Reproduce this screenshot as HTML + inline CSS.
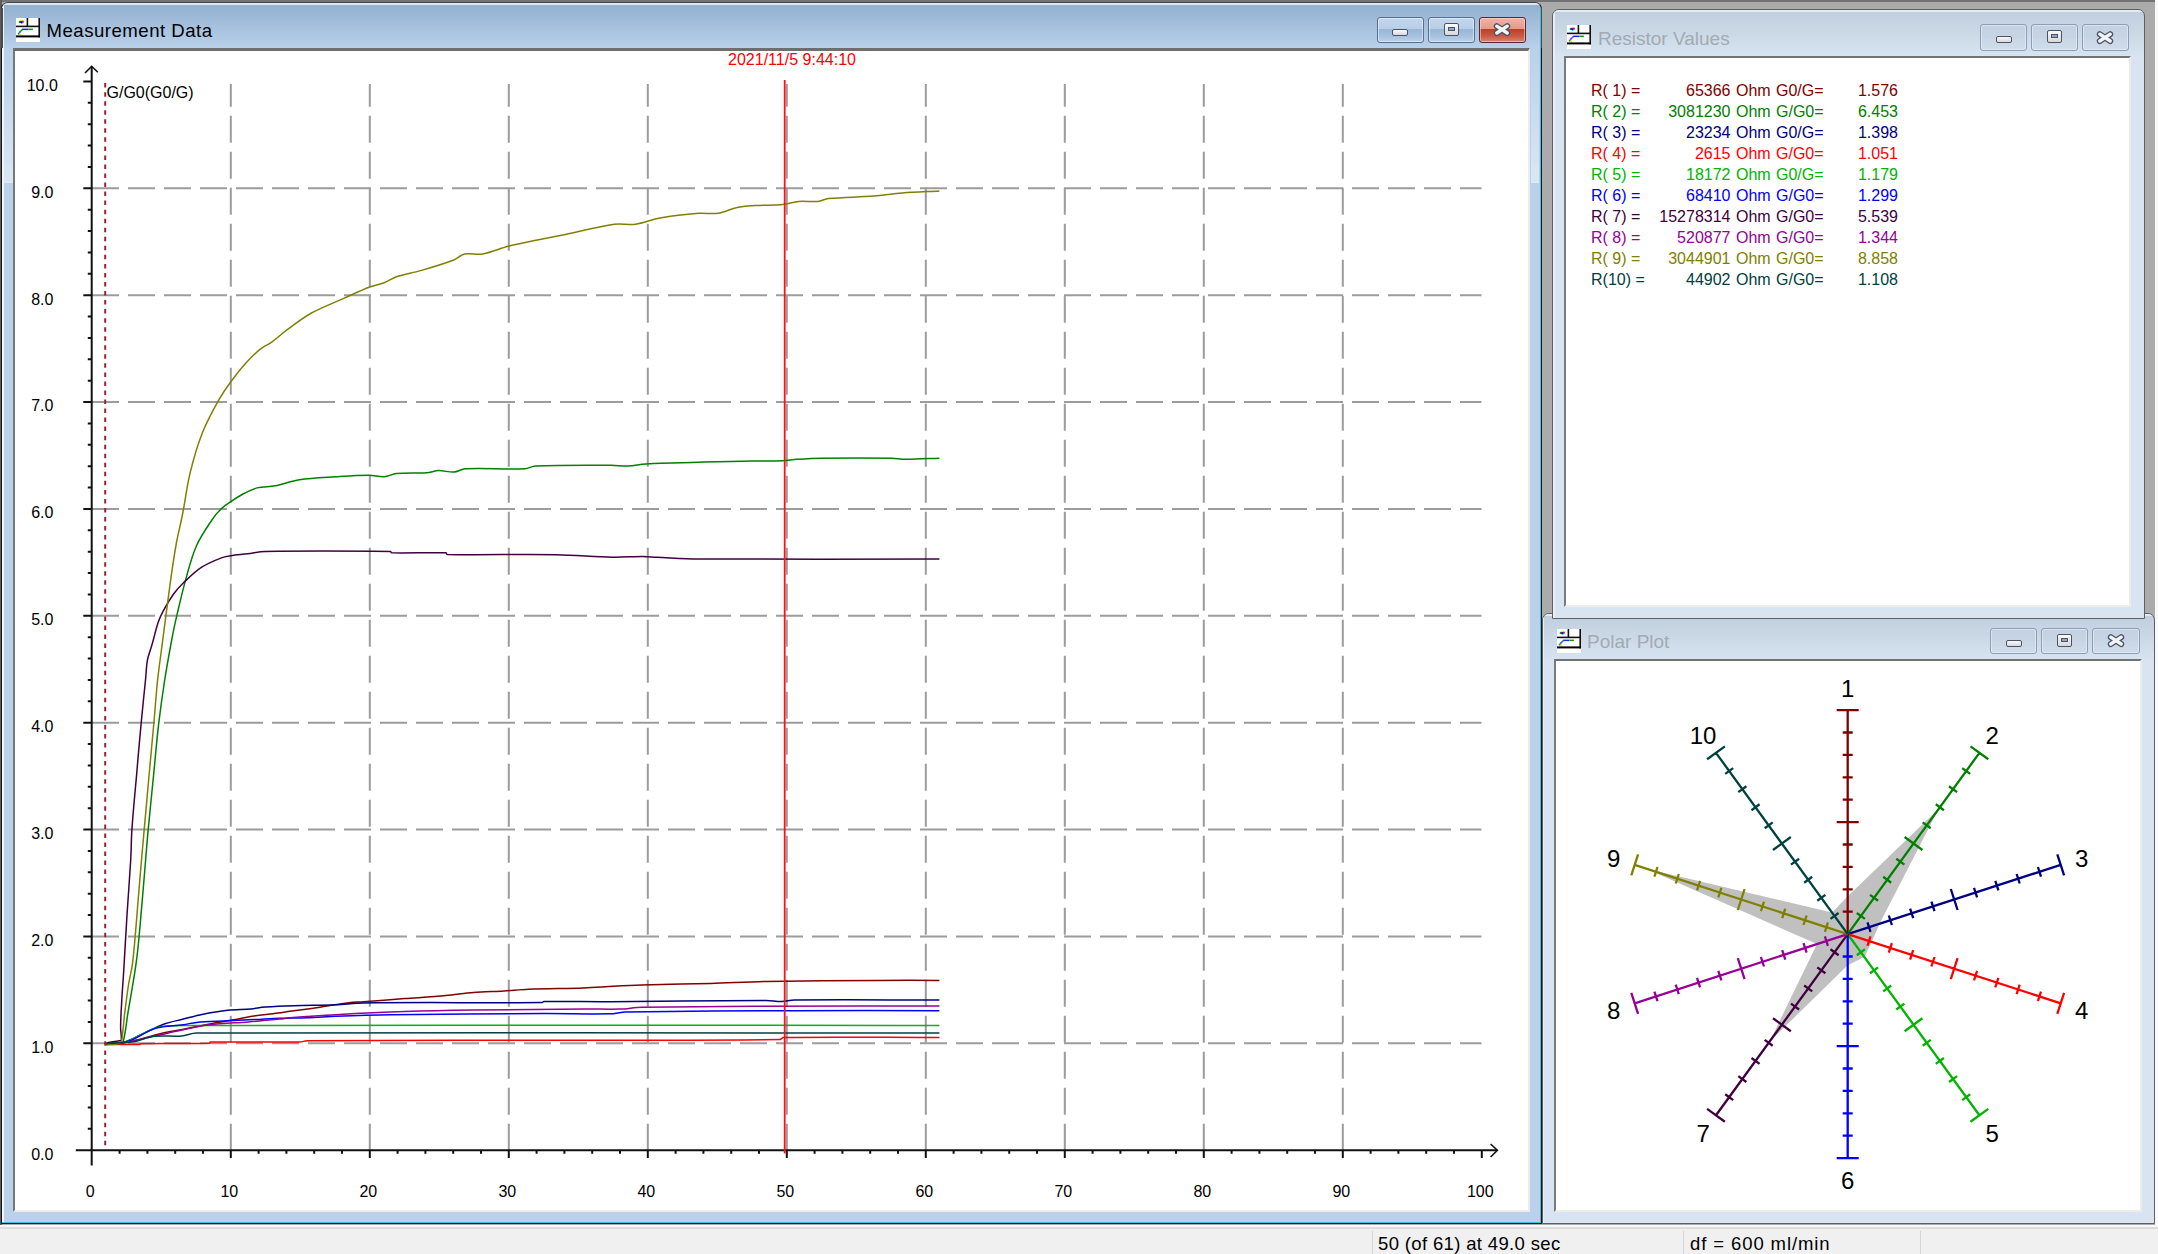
<!DOCTYPE html><html><head><meta charset="utf-8"><style>

html,body{margin:0;padding:0;width:2158px;height:1254px;overflow:hidden;background:#f0f0f0;font-family:'Liberation Sans', sans-serif;}
.abs{position:absolute;}
.win{position:absolute;box-sizing:border-box;border:1.5px solid #3a3a3a;border-radius:7px 7px 0 0;overflow:hidden;}
.btn{position:absolute;box-sizing:border-box;height:26.5px;border-radius:3px;}
.ttl{position:absolute;font-size:19px;white-space:pre;line-height:1;}
.txt{position:absolute;white-space:pre;line-height:1;}

</style></head><body>
<div class="abs" style="left:0;top:0;width:2155px;height:1225px;background:#ababab"></div>
<div class="abs" style="left:0;top:0;width:2155px;height:2px;background:#737373"></div>
<div class="abs" style="left:0;top:0;width:1.5px;height:1225px;background:#5c5c5c"></div>
<div class="abs" style="left:2155px;top:0;width:3px;height:1225px;background:#fafafa"></div>
<div class="abs" style="left:0;top:1224.5px;width:2158px;height:2.5px;background:#f8f8f8"></div>
<div class="abs" style="left:0;top:1227px;width:2158px;height:2px;background:#dcdcdc"></div>
<div class="win" style="left:1541.5px;top:613.3px;width:613.5px;height:611.2px;border-color:#606060;background:linear-gradient(#bfcedd 0px,#d6e3f0 45px,#d8e4f1 46px,#d8e4f1 100%)">
<div class="abs" style="left:0;top:0;right:0;height:1.5px;background:#e4ecf4"></div>
<div class="abs" style="left:0;top:0;bottom:0;width:1.5px;background:#e8eff6"></div>
</div>
<svg class="abs" style="left:1556.5px;top:628.7px" width="24" height="24" viewBox="0 0 24 24">
<rect x="0" y="0" width="24" height="24" fill="#fff"/>
<rect x="10.6" y="0" width="1.6" height="9" fill="#111"/>
<rect x="22.4" y="0" width="1.6" height="19.4" fill="#111"/>
<rect x="0" y="7.6" width="24" height="1.6" fill="#111"/>
<rect x="0" y="17.4" width="24" height="2" fill="#000"/>
<circle cx="5.3" cy="2.6" r="1.2" fill="#ffff00"/>
<circle cx="6.8" cy="3.8" r="1.2" fill="#ff2020"/>
<circle cx="3.9" cy="3.9" r="1.2" fill="#00a000"/>
<circle cx="5.8" cy="5.0" r="1.1" fill="#00ffff"/>
<circle cx="5.3" cy="4.1" r="1.2" fill="#0000ff"/>
<path d="M6.1 11.35 H12.2" stroke="#2020ff" stroke-width="1.5"/>
<path d="M12.2 11.35 H16.9" stroke="#109010" stroke-width="1.5"/>
<path d="M6.3 11.6 L4.6 13.2" stroke="#20a020" stroke-width="1.6"/>
<path d="M4.6 13.2 L3.3 14.6" stroke="#3030ff" stroke-width="1.6"/>
<path d="M3.3 14.6 L2.2 16.4" stroke="#20a020" stroke-width="1.6"/>
<path d="M3.4 16.4 H5" stroke="#e0e000" stroke-width="1.4"/>
</svg>
<div class="ttl" style="left:1587px;top:632px;color:#a3aab3">Polar Plot</div>
<div class="btn" style="left:1990.4px;top:627.5px;width:46.5px;border:1.3px solid #8c9db8;background:linear-gradient(#c3d1e0 0%,#c6d4e3 50%,#c8d6e5 51%,#d0dcea 100%);box-shadow:inset 0 0 0 1px rgba(240,248,255,0.5)"></div>
<div class="abs" style="left:2005.7px;top:639.5px;width:16px;height:7px;box-sizing:border-box;border:1.4px solid #4a5468;border-radius:2px;background:linear-gradient(#fafafa,#d8d8d8)"></div>
<div class="btn" style="left:2041.4px;top:627.5px;width:46.5px;border:1.3px solid #8c9db8;background:linear-gradient(#c3d1e0 0%,#c6d4e3 50%,#c8d6e5 51%,#d0dcea 100%);box-shadow:inset 0 0 0 1px rgba(240,248,255,0.5)"></div>
<div class="abs" style="left:2056.8px;top:633.5px;width:15.5px;height:13px;box-sizing:border-box;border:1.4px solid #4a5468;border-radius:2px;background:linear-gradient(#fafafa,#d8d8d8)"></div>
<div class="abs" style="left:2061.2px;top:637.5px;width:7px;height:4px;box-sizing:border-box;border:1.2px solid #4a5468;background:#8fa6c4"></div>
<div class="btn" style="left:2092.2px;top:627.5px;width:47.5px;border:1.3px solid #8c9db8;background:linear-gradient(#c3d1e0 0%,#c6d4e3 50%,#c8d6e5 51%,#d0dcea 100%);box-shadow:inset 0 0 0 1px rgba(240,248,255,0.5)"></div>
<svg class="abs" style="left:2106.9px;top:633.0px" width="18" height="15" viewBox="0 0 18 15">
<path d="M3.8 4.2 L14.2 11 M14.2 4.2 L3.8 11" stroke="#4a5468" stroke-width="6" stroke-linecap="round"/>
<path d="M3.8 4.2 L14.2 11 M14.2 4.2 L3.8 11" stroke="#f4f4f4" stroke-width="3.4" stroke-linecap="round"/>
</svg>
<div class="abs" style="left:1553.6px;top:659.2px;width:588.9px;height:552.8px;box-sizing:border-box;border-top:2.8px solid #727272;border-left:2.8px solid #7a7a7a;border-right:2px solid #ececec;border-bottom:2.6px solid #ececec;background:#fff"></div>
<div class="win" style="left:1552px;top:9.2px;width:592.6999999999998px;height:610.3px;border-color:#606060;background:linear-gradient(#bfcedd 0px,#d6e3f0 45px,#d8e4f1 46px,#d8e4f1 100%)">
<div class="abs" style="left:0;top:0;right:0;height:1.5px;background:#e4ecf4"></div>
<div class="abs" style="left:0;top:0;bottom:0;width:1.5px;background:#e8eff6"></div>
</div>
<svg class="abs" style="left:1567px;top:24.9px" width="24" height="24" viewBox="0 0 24 24">
<rect x="0" y="0" width="24" height="24" fill="#fff"/>
<rect x="10.6" y="0" width="1.6" height="9" fill="#111"/>
<rect x="22.4" y="0" width="1.6" height="19.4" fill="#111"/>
<rect x="0" y="7.6" width="24" height="1.6" fill="#111"/>
<rect x="0" y="17.4" width="24" height="2" fill="#000"/>
<circle cx="5.3" cy="2.6" r="1.2" fill="#ffff00"/>
<circle cx="6.8" cy="3.8" r="1.2" fill="#ff2020"/>
<circle cx="3.9" cy="3.9" r="1.2" fill="#00a000"/>
<circle cx="5.8" cy="5.0" r="1.1" fill="#00ffff"/>
<circle cx="5.3" cy="4.1" r="1.2" fill="#0000ff"/>
<path d="M6.1 11.35 H12.2" stroke="#2020ff" stroke-width="1.5"/>
<path d="M12.2 11.35 H16.9" stroke="#109010" stroke-width="1.5"/>
<path d="M6.3 11.6 L4.6 13.2" stroke="#20a020" stroke-width="1.6"/>
<path d="M4.6 13.2 L3.3 14.6" stroke="#3030ff" stroke-width="1.6"/>
<path d="M3.3 14.6 L2.2 16.4" stroke="#20a020" stroke-width="1.6"/>
<path d="M3.4 16.4 H5" stroke="#e0e000" stroke-width="1.4"/>
</svg>
<div class="ttl" style="left:1598px;top:29px;color:#a3aab3">Resistor Values</div>
<div class="btn" style="left:1980.2px;top:24.3px;width:46.5px;border:1.3px solid #8c9db8;background:linear-gradient(#c3d1e0 0%,#c6d4e3 50%,#c8d6e5 51%,#d0dcea 100%);box-shadow:inset 0 0 0 1px rgba(240,248,255,0.5)"></div>
<div class="abs" style="left:1995.5px;top:36.3px;width:16px;height:7px;box-sizing:border-box;border:1.4px solid #4a5468;border-radius:2px;background:linear-gradient(#fafafa,#d8d8d8)"></div>
<div class="btn" style="left:2031px;top:24.3px;width:46.5px;border:1.3px solid #8c9db8;background:linear-gradient(#c3d1e0 0%,#c6d4e3 50%,#c8d6e5 51%,#d0dcea 100%);box-shadow:inset 0 0 0 1px rgba(240,248,255,0.5)"></div>
<div class="abs" style="left:2046.5px;top:30.3px;width:15.5px;height:13px;box-sizing:border-box;border:1.4px solid #4a5468;border-radius:2px;background:linear-gradient(#fafafa,#d8d8d8)"></div>
<div class="abs" style="left:2050.8px;top:34.3px;width:7px;height:4px;box-sizing:border-box;border:1.2px solid #4a5468;background:#8fa6c4"></div>
<div class="btn" style="left:2081.6px;top:24.3px;width:47.5px;border:1.3px solid #8c9db8;background:linear-gradient(#c3d1e0 0%,#c6d4e3 50%,#c8d6e5 51%,#d0dcea 100%);box-shadow:inset 0 0 0 1px rgba(240,248,255,0.5)"></div>
<svg class="abs" style="left:2096.3px;top:29.8px" width="18" height="15" viewBox="0 0 18 15">
<path d="M3.8 4.2 L14.2 11 M14.2 4.2 L3.8 11" stroke="#4a5468" stroke-width="6" stroke-linecap="round"/>
<path d="M3.8 4.2 L14.2 11 M14.2 4.2 L3.8 11" stroke="#f4f4f4" stroke-width="3.4" stroke-linecap="round"/>
</svg>
<div class="abs" style="left:1564px;top:56.3px;width:567px;height:551.2px;box-sizing:border-box;border-top:2.8px solid #727272;border-left:2.8px solid #7a7a7a;border-right:2px solid #ececec;border-bottom:2.5px solid #ececec;background:#fff"></div>
<div class="win" style="left:1px;top:2px;width:1541px;height:1222.4px;border-color:#161616;border-top-color:#484848;background:linear-gradient(#94b1d1 3px,#bad1ea 46px,#b9d1ea 47px,#b9d1ea 100%)">
<div class="abs" style="left:0;top:0;right:0;height:2px;background:#dfe8f1"></div>
<div class="abs" style="left:0;top:0;bottom:0;width:1.6px;background:#eef5fb"></div>
<div class="abs" style="right:0;top:6px;bottom:0;width:1.5px;background:#3dbfe0"></div>
<div class="abs" style="left:0;right:0;bottom:0;height:1.5px;background:#3dbfe0"></div>
</div>
<div class="abs" style="left:1px;top:8px;width:1.5px;height:40px;background:#4a4a4a"></div>
<div class="abs" style="left:1540.5px;top:8px;width:1.5px;height:40px;background:#4a4a4a"></div>
<div class="abs" style="left:4px;top:51px;width:8.5px;height:132px;background:linear-gradient(rgba(220,232,244,0) 0%,rgba(222,234,246,0.9) 100%)"></div>
<div class="abs" style="left:1530.5px;top:51px;width:8.5px;height:132px;background:linear-gradient(rgba(220,232,244,0) 0%,rgba(222,234,246,0.9) 100%)"></div>
<svg class="abs" style="left:16px;top:18px" width="24" height="24" viewBox="0 0 24 24">
<rect x="0" y="0" width="24" height="24" fill="#fff"/>
<rect x="10.6" y="0" width="1.6" height="9" fill="#111"/>
<rect x="22.4" y="0" width="1.6" height="19.4" fill="#111"/>
<rect x="0" y="7.6" width="24" height="1.6" fill="#111"/>
<rect x="0" y="17.4" width="24" height="2" fill="#000"/>
<circle cx="5.3" cy="2.6" r="1.2" fill="#ffff00"/>
<circle cx="6.8" cy="3.8" r="1.2" fill="#ff2020"/>
<circle cx="3.9" cy="3.9" r="1.2" fill="#00a000"/>
<circle cx="5.8" cy="5.0" r="1.1" fill="#00ffff"/>
<circle cx="5.3" cy="4.1" r="1.2" fill="#0000ff"/>
<path d="M6.1 11.35 H12.2" stroke="#2020ff" stroke-width="1.5"/>
<path d="M12.2 11.35 H16.9" stroke="#109010" stroke-width="1.5"/>
<path d="M6.3 11.6 L4.6 13.2" stroke="#20a020" stroke-width="1.6"/>
<path d="M4.6 13.2 L3.3 14.6" stroke="#3030ff" stroke-width="1.6"/>
<path d="M3.3 14.6 L2.2 16.4" stroke="#20a020" stroke-width="1.6"/>
<path d="M3.4 16.4 H5" stroke="#e0e000" stroke-width="1.4"/>
</svg>
<div class="ttl" style="left:46.5px;top:22.3px;color:#000;font-size:18.6px;letter-spacing:0.5px">Measurement Data</div>
<div class="btn" style="left:1377.1px;top:16.7px;width:46.5px;border:1.3px solid #566f8e;background:linear-gradient(#c3d7ed 0%,#b8cee8 45%,#9ab6d6 46%,#a7c1df 75%,#bcd2ea 100%);box-shadow:inset 0 0 0 1px rgba(235,245,255,0.6)"></div>
<div class="abs" style="left:1392.3px;top:28.7px;width:16px;height:7px;box-sizing:border-box;border:1.4px solid #4a5468;border-radius:2px;background:linear-gradient(#fafafa,#d8d8d8)"></div>
<div class="btn" style="left:1428.1px;top:16.7px;width:46.5px;border:1.3px solid #566f8e;background:linear-gradient(#c3d7ed 0%,#b8cee8 45%,#9ab6d6 46%,#a7c1df 75%,#bcd2ea 100%);box-shadow:inset 0 0 0 1px rgba(235,245,255,0.6)"></div>
<div class="abs" style="left:1443.5px;top:22.7px;width:15.5px;height:13px;box-sizing:border-box;border:1.4px solid #4a5468;border-radius:2px;background:linear-gradient(#fafafa,#d8d8d8)"></div>
<div class="abs" style="left:1447.8px;top:26.7px;width:7px;height:4px;box-sizing:border-box;border:1.2px solid #4a5468;background:#8fa6c4"></div>
<div class="btn" style="left:1478.6px;top:16.7px;width:47.5px;border:1.3px solid #5a2535;background:linear-gradient(#eeb4a8 0%,#e49a88 45%,#bb3f25 46%,#c85a44 75%,#d98474 100%);box-shadow:inset 0 0 0 1px rgba(255,220,210,0.55)"></div>
<svg class="abs" style="left:1493.3px;top:22.2px" width="18" height="15" viewBox="0 0 18 15">
<path d="M3.8 4.2 L14.2 11 M14.2 4.2 L3.8 11" stroke="#4a5468" stroke-width="6" stroke-linecap="round"/>
<path d="M3.8 4.2 L14.2 11 M14.2 4.2 L3.8 11" stroke="#f4f4f4" stroke-width="3.4" stroke-linecap="round"/>
</svg>
<div class="abs" style="left:13px;top:48px;width:1516.7px;height:1164.2px;box-sizing:border-box;border-top:3px solid #6e6e6e;border-left:2.8px solid #777;border-right:2.5px solid #ececec;border-bottom:2.5px solid #ececec;background:#fff"></div>
<svg class="abs" style="left:0;top:0" width="2158" height="1254" viewBox="0 0 2158 1254">
<g font-family="'Liberation Sans', sans-serif">
<path d="M92 1043.3 H1481.5 M92 936.4 H1481.5 M92 829.6 H1481.5 M92 722.7 H1481.5 M92 615.8 H1481.5 M92 508.9 H1481.5 M92 402.0 H1481.5 M92 295.2 H1481.5 M92 188.3 H1481.5" stroke="#9c9c9c" stroke-width="2" stroke-dasharray="27 9" fill="none"/>
<path d="M230.8 1150.8 V84 M369.8 1150.8 V84 M508.8 1150.8 V84 M647.8 1150.8 V84 M786.8 1150.8 V84 M925.8 1150.8 V84 M1064.8 1150.8 V84 M1203.8 1150.8 V84 M1342.8 1150.8 V84" stroke="#9c9c9c" stroke-width="2" stroke-dasharray="27 9" fill="none"/>
<path d="M105.2 83.1 V1150" stroke="#9a2430" stroke-width="2" stroke-dasharray="4.5 4.54" fill="none"/>
<path d="M91.7 66.5 V1165.5 M75.8 1150.2 H1497" stroke="#111" stroke-width="2" fill="none"/>
<path d="M85 73 L91.7 66.3 L97.8 72.3 M1490.6 1144 L1497.4 1150.2 L1490.6 1157" stroke="#111" stroke-width="1.6" fill="none"/>
<path d="M87.8 1128.8 H91.7 M87.8 1107.4 H91.7 M87.8 1086.1 H91.7 M87.8 1064.7 H91.7 M83.3 1043.3 H91.7 M87.8 1021.9 H91.7 M87.8 1000.6 H91.7 M87.8 979.2 H91.7 M87.8 957.8 H91.7 M83.3 936.4 H91.7 M87.8 915.1 H91.7 M87.8 893.7 H91.7 M87.8 872.3 H91.7 M87.8 850.9 H91.7 M83.3 829.6 H91.7 M87.8 808.2 H91.7 M87.8 786.8 H91.7 M87.8 765.4 H91.7 M87.8 744.1 H91.7 M83.3 722.7 H91.7 M87.8 701.3 H91.7 M87.8 679.9 H91.7 M87.8 658.6 H91.7 M87.8 637.2 H91.7 M83.3 615.8 H91.7 M87.8 594.4 H91.7 M87.8 573.0 H91.7 M87.8 551.7 H91.7 M87.8 530.3 H91.7 M83.3 508.9 H91.7 M87.8 487.5 H91.7 M87.8 466.2 H91.7 M87.8 444.8 H91.7 M87.8 423.4 H91.7 M83.3 402.0 H91.7 M87.8 380.7 H91.7 M87.8 359.3 H91.7 M87.8 337.9 H91.7 M87.8 316.5 H91.7 M83.3 295.2 H91.7 M87.8 273.8 H91.7 M87.8 252.4 H91.7 M87.8 231.0 H91.7 M87.8 209.7 H91.7 M83.3 188.3 H91.7 M87.8 166.9 H91.7 M87.8 145.5 H91.7 M87.8 124.2 H91.7 M87.8 102.8 H91.7 M83.3 81.4 H91.7 M119.6 1150.2 V1153.8 M147.4 1150.2 V1153.8 M175.2 1150.2 V1153.8 M203.0 1150.2 V1153.8 M230.8 1150.2 V1158 M258.6 1150.2 V1153.8 M286.4 1150.2 V1153.8 M314.2 1150.2 V1153.8 M342.0 1150.2 V1153.8 M369.8 1150.2 V1158 M397.6 1150.2 V1153.8 M425.4 1150.2 V1153.8 M453.2 1150.2 V1153.8 M481.0 1150.2 V1153.8 M508.8 1150.2 V1158 M536.6 1150.2 V1153.8 M564.4 1150.2 V1153.8 M592.2 1150.2 V1153.8 M620.0 1150.2 V1153.8 M647.8 1150.2 V1158 M675.6 1150.2 V1153.8 M703.4 1150.2 V1153.8 M731.2 1150.2 V1153.8 M759.0 1150.2 V1153.8 M786.8 1150.2 V1158 M814.6 1150.2 V1153.8 M842.4 1150.2 V1153.8 M870.2 1150.2 V1153.8 M898.0 1150.2 V1153.8 M925.8 1150.2 V1158 M953.6 1150.2 V1153.8 M981.4 1150.2 V1153.8 M1009.2 1150.2 V1153.8 M1037.0 1150.2 V1153.8 M1064.8 1150.2 V1158 M1092.6 1150.2 V1153.8 M1120.4 1150.2 V1153.8 M1148.2 1150.2 V1153.8 M1176.0 1150.2 V1153.8 M1203.8 1150.2 V1158 M1231.6 1150.2 V1153.8 M1259.4 1150.2 V1153.8 M1287.2 1150.2 V1153.8 M1315.0 1150.2 V1153.8 M1342.8 1150.2 V1158 M1370.6 1150.2 V1153.8 M1398.4 1150.2 V1153.8 M1426.2 1150.2 V1153.8 M1454.0 1150.2 V1153.8 M1481.8 1150.2 V1158" stroke="#111" stroke-width="2" fill="none"/>
<text x="42.3" y="1159.5" font-size="16" text-anchor="middle" fill="#000">0.0</text>
<text x="42.3" y="1052.6" font-size="16" text-anchor="middle" fill="#000">1.0</text>
<text x="42.3" y="945.7" font-size="16" text-anchor="middle" fill="#000">2.0</text>
<text x="42.3" y="838.9" font-size="16" text-anchor="middle" fill="#000">3.0</text>
<text x="42.3" y="732.0" font-size="16" text-anchor="middle" fill="#000">4.0</text>
<text x="42.3" y="625.1" font-size="16" text-anchor="middle" fill="#000">5.0</text>
<text x="42.3" y="518.2" font-size="16" text-anchor="middle" fill="#000">6.0</text>
<text x="42.3" y="411.3" font-size="16" text-anchor="middle" fill="#000">7.0</text>
<text x="42.3" y="304.5" font-size="16" text-anchor="middle" fill="#000">8.0</text>
<text x="42.3" y="197.6" font-size="16" text-anchor="middle" fill="#000">9.0</text>
<text x="42.3" y="90.7" font-size="16" text-anchor="middle" fill="#000">10.0</text>
<text x="90.3" y="1197.4" font-size="16" text-anchor="middle" fill="#000">0</text>
<text x="229.3" y="1197.4" font-size="16" text-anchor="middle" fill="#000">10</text>
<text x="368.3" y="1197.4" font-size="16" text-anchor="middle" fill="#000">20</text>
<text x="507.3" y="1197.4" font-size="16" text-anchor="middle" fill="#000">30</text>
<text x="646.3" y="1197.4" font-size="16" text-anchor="middle" fill="#000">40</text>
<text x="785.3" y="1197.4" font-size="16" text-anchor="middle" fill="#000">50</text>
<text x="924.3" y="1197.4" font-size="16" text-anchor="middle" fill="#000">60</text>
<text x="1063.3" y="1197.4" font-size="16" text-anchor="middle" fill="#000">70</text>
<text x="1202.3" y="1197.4" font-size="16" text-anchor="middle" fill="#000">80</text>
<text x="1341.3" y="1197.4" font-size="16" text-anchor="middle" fill="#000">90</text>
<text x="1480.3" y="1197.4" font-size="16" text-anchor="middle" fill="#000">100</text>
<text x="106.5" y="97.5" font-size="16" fill="#000">G/G0(G0/G)</text>
<path d="M106.0 1043.7 C110.7 1043.5 115.4 1043.5 120.0 1043.0 C125.1 1042.4 130.2 1041.6 135.2 1040.4 C143.3 1038.5 151.2 1035.8 159.3 1033.9 C167.3 1032.1 175.4 1030.9 183.4 1029.3 C191.7 1027.7 200.0 1025.8 208.4 1024.2 C217.3 1022.5 226.3 1021.2 235.3 1019.6 C240.9 1018.6 246.4 1017.2 252.0 1016.3 C260.6 1015.0 269.3 1014.3 277.9 1013.1 C281.9 1012.6 286.0 1011.8 290.0 1011.2 C296.6 1010.3 303.1 1009.6 309.7 1008.7 C313.1 1008.2 316.6 1007.7 320.0 1007.2 C329.7 1005.7 339.3 1004.0 349.0 1002.8 C353.8 1002.2 358.6 1002.1 363.4 1001.7 C377.2 1000.7 390.9 999.6 404.7 998.6 C418.5 997.6 432.3 996.8 446.0 995.6 C455.2 994.8 464.3 993.2 473.5 992.5 C483.6 991.7 493.8 991.6 504.0 991.0 C512.2 990.5 520.3 989.5 528.5 989.2 C546.9 988.5 565.2 988.5 583.6 987.9 C593.5 987.6 603.3 986.8 613.2 986.3 C622.6 985.8 632.1 985.3 641.5 985.0 C664.6 984.3 687.7 984.0 710.8 983.4 C729.2 982.9 747.6 981.8 766.0 981.5 C803.3 980.8 840.5 980.6 877.8 980.4 C898.3 980.3 918.9 980.4 939.4 980.4" stroke="#800000" stroke-width="1.5" fill="none" stroke-linejoin="round"/>
<path d="M106.0 1044.0 C110.5 1043.8 115.0 1044.0 119.5 1043.5 C120.8 1043.3 122.7 1043.2 123.1 1041.9 C125.7 1032.6 126.3 1022.8 127.9 1013.2 C130.9 995.1 134.4 977.1 136.7 958.9 C139.2 939.3 140.5 919.6 142.3 899.9 C143.5 886.6 144.5 873.3 145.6 860.0 C146.5 849.9 147.2 839.7 148.2 829.6 C149.9 811.7 151.7 793.9 153.5 776.0 C155.3 758.2 156.7 740.4 158.8 722.7 C160.5 708.4 162.5 694.2 164.7 680.0 C166.7 667.0 169.1 654.0 171.5 641.0 C173.1 632.5 174.8 624.1 176.8 615.7 C179.8 602.9 182.7 590.1 186.3 577.4 C189.3 566.6 192.0 555.7 196.6 545.5 C200.6 536.4 206.4 528.2 211.9 520.0 C214.5 516.0 217.6 512.3 221.0 509.0 C223.6 506.4 226.7 504.5 229.7 502.4 C234.0 499.4 238.4 496.5 243.0 494.0 C247.5 491.6 252.1 489.2 257.0 487.9 C262.9 486.4 269.2 487.0 275.2 485.8 C283.4 484.2 291.2 480.9 299.4 479.7 C311.4 477.9 323.7 477.5 335.8 476.7 C346.9 476.0 358.0 475.2 369.1 475.2 C374.2 475.2 379.2 477.0 384.2 476.7 C388.4 476.5 392.2 474.0 396.4 473.6 C406.5 472.7 416.6 473.4 426.7 472.7 C430.8 472.4 434.7 470.7 438.8 470.6 C443.9 470.5 448.9 472.4 453.9 472.1 C457.8 471.8 461.3 469.0 465.3 468.8 C485.1 467.9 505.0 469.6 524.9 468.8 C528.5 468.7 531.8 466.1 535.4 466.0 C560.5 465.0 585.7 465.3 610.9 465.3 C616.7 465.3 622.6 466.2 628.4 466.0 C634.3 465.8 640.1 464.1 646.0 463.9 C681.1 462.5 716.1 461.9 751.2 461.1 C761.7 460.9 772.3 461.1 782.8 460.7 C787.5 460.5 792.1 459.6 796.8 459.3 C805.0 458.8 813.2 458.3 821.4 458.2 C844.8 457.9 868.2 457.9 891.6 458.2 C896.3 458.3 900.9 459.3 905.6 459.3 C916.9 459.3 928.1 458.6 939.4 458.2" stroke="#008000" stroke-width="1.5" fill="none" stroke-linejoin="round"/>
<path d="M106.0 1043.7 C112.7 1042.9 119.6 1043.3 126.0 1041.4 C133.2 1039.3 139.5 1035.2 146.3 1032.1 C152.5 1029.3 158.5 1026.0 164.9 1023.8 C170.9 1021.7 177.2 1020.7 183.4 1019.1 C189.6 1017.6 195.7 1015.7 201.9 1014.5 C210.5 1012.8 219.2 1011.3 227.9 1010.3 C235.6 1009.4 243.4 1009.6 251.1 1008.9 C255.8 1008.5 260.3 1007.4 265.0 1007.1 C274.6 1006.4 284.1 1006.0 293.7 1005.7 C307.8 1005.2 321.8 1005.4 335.9 1004.8 C345.1 1004.4 354.2 1003.0 363.4 1002.9 C423.0 1002.2 482.7 1003.0 542.3 1002.5 C542.9 1002.5 543.2 1001.5 543.8 1001.5 C565.9 1001.2 587.9 1001.8 610.0 1001.7 C662.0 1001.5 714.0 1000.6 766.0 1000.5 C771.2 1000.5 776.5 1001.6 781.7 1001.5 C785.9 1001.4 790.1 1000.0 794.3 1000.0 C842.7 999.5 891.0 1000.0 939.4 1000.0" stroke="#000080" stroke-width="1.5" fill="none" stroke-linejoin="round"/>
<path d="M106.0 1044.5 C117.3 1044.5 128.6 1044.8 139.9 1044.5 C140.2 1044.5 140.2 1043.7 140.5 1043.7 C163.5 1043.3 186.4 1043.9 209.4 1043.3 C209.9 1043.3 209.8 1042.0 210.3 1042.0 C240.2 1041.6 270.1 1042.4 300.0 1042.0 C302.3 1042.0 304.5 1040.7 306.8 1040.7 C404.5 1040.1 502.3 1040.4 600.0 1040.2 C660.0 1040.0 720.0 1040.4 780.0 1039.5 C781.3 1039.5 782.0 1037.5 783.3 1037.5 C835.3 1036.8 887.4 1037.5 939.4 1037.5" stroke="#ff0000" stroke-width="1.5" fill="none" stroke-linejoin="round"/>
<path d="M106.0 1043.7 C112.7 1043.1 119.6 1043.8 126.0 1041.8 C136.4 1038.5 145.1 1030.9 155.6 1027.9 C164.5 1025.4 174.1 1025.6 183.4 1025.6 C435.4 1024.8 687.4 1025.5 939.4 1025.4" stroke="#00b400" stroke-width="1.5" fill="none" stroke-linejoin="round"/>
<path d="M106.0 1043.7 C112.7 1043.2 119.6 1044.3 126.0 1042.3 C136.4 1039.1 145.2 1031.6 155.6 1028.4 C164.5 1025.7 174.2 1026.1 183.4 1024.7 C187.8 1024.1 192.0 1022.8 196.4 1022.4 C205.3 1021.6 214.3 1021.4 223.3 1021.0 C233.5 1020.5 243.6 1020.1 253.8 1019.6 C262.5 1019.2 271.1 1018.5 279.8 1018.2 C288.8 1017.9 297.8 1018.1 306.8 1017.8 C316.5 1017.5 326.2 1016.6 335.9 1016.2 C354.2 1015.5 372.6 1014.9 390.9 1014.7 C441.9 1014.1 492.8 1013.8 543.8 1013.6 C565.9 1013.5 587.9 1014.2 610.0 1013.8 C615.3 1013.7 620.5 1012.1 625.8 1012.0 C682.0 1011.1 738.1 1010.9 794.3 1010.7 C842.7 1010.5 891.0 1010.7 939.4 1010.7" stroke="#0000ff" stroke-width="1.5" fill="none" stroke-linejoin="round"/>
<path d="M106.0 1043.5 C107.3 1043.1 108.6 1042.6 110.0 1042.3 C113.1 1041.7 116.3 1041.3 119.5 1040.8 C120.1 1040.7 121.3 1041.1 121.3 1040.5 C121.7 1035.8 120.5 1031.2 120.6 1026.5 C120.7 1017.6 121.3 1008.6 121.8 999.7 C122.3 990.7 123.0 981.8 123.6 972.8 C124.8 953.5 125.8 934.3 127.0 915.0 C128.2 896.7 129.6 878.3 130.7 860.0 C131.3 849.9 131.2 839.7 131.9 829.6 C133.1 811.7 134.9 793.9 136.5 776.0 C138.0 758.2 139.5 740.5 141.2 722.7 C142.5 708.5 144.1 694.2 145.5 680.0 C146.2 673.5 146.2 666.9 147.4 660.4 C148.4 655.1 150.4 650.1 151.9 645.0 C154.1 637.3 155.8 629.5 158.3 622.0 C159.6 618.1 161.4 614.3 163.4 610.6 C166.5 604.9 169.8 599.3 173.6 594.0 C176.6 589.9 180.1 586.0 183.8 582.5 C189.5 577.1 195.1 571.5 201.7 567.2 C208.0 563.1 215.1 560.3 222.1 557.6 C224.9 556.5 228.0 556.1 231.0 555.7 C236.5 554.9 242.1 554.5 247.6 553.8 C253.4 553.1 259.2 551.5 265.1 551.4 C306.9 550.7 348.7 550.9 390.5 551.4 C391.1 551.4 390.9 552.8 391.5 552.8 C409.7 553.3 427.8 552.2 446.0 552.8 C446.7 552.8 446.3 554.5 447.0 554.5 C483.5 555.1 520.0 554.1 556.5 554.7 C575.2 555.0 593.9 556.8 612.6 557.2 C622.6 557.4 632.5 556.5 642.5 556.5 C647.2 556.5 651.8 557.0 656.5 557.2 C670.5 557.8 684.6 558.9 698.6 559.0 C778.9 559.5 859.1 559.0 939.4 559.0" stroke="#400040" stroke-width="1.5" fill="none" stroke-linejoin="round"/>
<path d="M106.0 1044.5 C114.2 1043.5 122.5 1042.8 130.6 1041.4 C139.0 1039.9 147.3 1037.6 155.6 1035.8 C164.9 1033.8 174.1 1031.7 183.4 1029.8 C192.0 1028.0 200.6 1025.8 209.4 1024.7 C222.3 1023.1 235.3 1022.9 248.3 1021.9 C258.8 1021.1 269.3 1020.1 279.8 1019.1 C283.2 1018.8 286.6 1018.1 290.0 1017.8 C305.3 1016.6 320.6 1015.5 335.9 1014.7 C358.8 1013.5 381.8 1012.4 404.7 1011.6 C427.6 1010.8 450.6 1010.4 473.5 1010.1 C510.7 1009.6 547.9 1009.3 585.1 1009.0 C596.7 1008.9 608.4 1009.5 620.0 1009.1 C627.2 1008.9 634.3 1007.3 641.5 1007.2 C715.6 1006.3 789.6 1006.3 863.7 1006.0 C888.9 1005.9 914.2 1006.0 939.4 1006.0" stroke="#960096" stroke-width="1.5" fill="none" stroke-linejoin="round"/>
<path d="M106.0 1044.5 C108.0 1044.5 110.0 1044.6 112.0 1044.5 C114.5 1044.3 117.1 1044.2 119.5 1043.5 C120.3 1043.3 121.4 1042.7 121.5 1041.9 C123.1 1032.4 123.5 1022.8 124.7 1013.2 C125.9 1003.8 127.0 994.4 128.5 985.0 C129.7 977.3 131.8 969.8 132.7 962.1 C135.1 940.9 136.5 919.6 138.3 898.3 C139.4 885.5 140.4 872.8 141.5 860.0 C142.4 849.9 143.3 839.7 144.2 829.6 C145.8 811.7 147.4 793.9 149.0 776.0 C150.6 758.2 152.3 740.5 153.9 722.7 C155.2 708.5 156.1 694.2 157.6 680.0 C158.9 668.0 160.7 656.0 162.2 644.0 C163.4 634.6 164.7 625.1 165.9 615.7 C167.6 602.9 169.2 590.1 171.0 577.4 C172.7 565.9 174.3 554.4 176.4 543.0 C178.2 533.3 180.7 523.7 182.6 514.0 C185.3 500.1 186.9 485.9 190.3 472.1 C193.6 458.8 197.3 445.5 202.4 432.7 C207.0 421.2 213.0 410.2 219.1 399.4 C222.7 393.0 226.9 387.1 231.2 381.2 C235.5 375.3 240.1 369.4 245.0 364.0 C249.7 358.8 254.6 353.8 260.0 349.4 C263.7 346.4 268.2 344.6 272.1 341.8 C277.4 338.0 282.1 333.5 287.3 329.7 C295.2 323.9 302.9 317.7 311.5 313.0 C322.2 307.1 333.7 302.9 344.8 297.9 C352.9 294.3 360.9 290.5 369.1 287.3 C374.0 285.4 379.3 284.6 384.2 282.7 C388.4 281.1 392.1 278.1 396.4 276.7 C404.3 274.1 412.6 272.9 420.6 270.6 C431.8 267.4 443.0 264.1 453.9 260.0 C457.7 258.6 460.5 254.8 464.5 254.0 C470.5 252.8 476.8 255.1 482.8 254.0 C491.8 252.4 500.2 248.3 509.1 246.0 C518.4 243.6 527.8 241.9 537.2 240.0 C546.6 238.1 555.9 236.3 565.3 234.4 C581.7 231.0 597.9 226.6 614.4 224.2 C621.3 223.2 628.5 225.2 635.4 224.2 C643.8 223.0 651.7 219.3 660.0 217.9 C672.8 215.7 685.7 214.3 698.6 213.3 C705.0 212.8 711.5 214.3 717.9 213.3 C724.5 212.3 730.6 208.8 737.2 207.4 C742.9 206.2 748.8 206.0 754.7 205.6 C764.1 205.0 773.5 205.5 782.8 204.6 C788.1 204.1 793.2 201.9 798.6 201.4 C805.0 200.8 811.5 202.0 817.9 201.4 C821.5 201.1 824.8 198.9 828.4 198.6 C843.6 197.2 858.8 197.3 874.0 196.1 C883.4 195.4 892.7 193.7 902.1 193.0 C914.5 192.0 927.0 191.6 939.4 190.9" stroke="#808000" stroke-width="1.5" fill="none" stroke-linejoin="round"/>
<path d="M106.0 1043.7 C115.7 1042.9 125.6 1042.9 135.2 1041.4 C141.6 1040.4 147.4 1037.0 153.8 1036.3 C163.0 1035.2 172.4 1036.7 181.6 1036.0 C186.6 1035.6 191.4 1033.0 196.4 1033.0 C444.1 1032.1 691.7 1033.1 939.4 1033.1" stroke="#004040" stroke-width="1.5" fill="none" stroke-linejoin="round"/>
<path d="M784.7 80 V1153.5" stroke="#ff1010" stroke-width="1.8" fill="none"/>
<text x="728" y="64.5" font-size="16" fill="#ff0000" textLength="128" lengthAdjust="spacingAndGlyphs">2021/11/5 9:44:10</text>
<text x="1591" y="96" font-size="16" fill="#800000" xml:space="preserve">R( 1) =</text>
<text x="1730.5" y="96" font-size="16" fill="#800000" text-anchor="end">65366</text>
<text x="1736" y="96" font-size="16" fill="#800000">Ohm</text>
<text x="1776" y="96" font-size="16" fill="#800000">G0/G=</text>
<text x="1898" y="96" font-size="16" fill="#800000" text-anchor="end">1.576</text>
<text x="1591" y="117" font-size="16" fill="#008000" xml:space="preserve">R( 2) =</text>
<text x="1730.5" y="117" font-size="16" fill="#008000" text-anchor="end">3081230</text>
<text x="1736" y="117" font-size="16" fill="#008000">Ohm</text>
<text x="1776" y="117" font-size="16" fill="#008000">G/G0=</text>
<text x="1898" y="117" font-size="16" fill="#008000" text-anchor="end">6.453</text>
<text x="1591" y="138" font-size="16" fill="#000080" xml:space="preserve">R( 3) =</text>
<text x="1730.5" y="138" font-size="16" fill="#000080" text-anchor="end">23234</text>
<text x="1736" y="138" font-size="16" fill="#000080">Ohm</text>
<text x="1776" y="138" font-size="16" fill="#000080">G0/G=</text>
<text x="1898" y="138" font-size="16" fill="#000080" text-anchor="end">1.398</text>
<text x="1591" y="159" font-size="16" fill="#ff0000" xml:space="preserve">R( 4) =</text>
<text x="1730.5" y="159" font-size="16" fill="#ff0000" text-anchor="end">2615</text>
<text x="1736" y="159" font-size="16" fill="#ff0000">Ohm</text>
<text x="1776" y="159" font-size="16" fill="#ff0000">G/G0=</text>
<text x="1898" y="159" font-size="16" fill="#ff0000" text-anchor="end">1.051</text>
<text x="1591" y="180" font-size="16" fill="#00b400" xml:space="preserve">R( 5) =</text>
<text x="1730.5" y="180" font-size="16" fill="#00b400" text-anchor="end">18172</text>
<text x="1736" y="180" font-size="16" fill="#00b400">Ohm</text>
<text x="1776" y="180" font-size="16" fill="#00b400">G0/G=</text>
<text x="1898" y="180" font-size="16" fill="#00b400" text-anchor="end">1.179</text>
<text x="1591" y="201" font-size="16" fill="#0000ff" xml:space="preserve">R( 6) =</text>
<text x="1730.5" y="201" font-size="16" fill="#0000ff" text-anchor="end">68410</text>
<text x="1736" y="201" font-size="16" fill="#0000ff">Ohm</text>
<text x="1776" y="201" font-size="16" fill="#0000ff">G/G0=</text>
<text x="1898" y="201" font-size="16" fill="#0000ff" text-anchor="end">1.299</text>
<text x="1591" y="222" font-size="16" fill="#400040" xml:space="preserve">R( 7) =</text>
<text x="1730.5" y="222" font-size="16" fill="#400040" text-anchor="end">15278314</text>
<text x="1736" y="222" font-size="16" fill="#400040">Ohm</text>
<text x="1776" y="222" font-size="16" fill="#400040">G/G0=</text>
<text x="1898" y="222" font-size="16" fill="#400040" text-anchor="end">5.539</text>
<text x="1591" y="243" font-size="16" fill="#960096" xml:space="preserve">R( 8) =</text>
<text x="1730.5" y="243" font-size="16" fill="#960096" text-anchor="end">520877</text>
<text x="1736" y="243" font-size="16" fill="#960096">Ohm</text>
<text x="1776" y="243" font-size="16" fill="#960096">G/G0=</text>
<text x="1898" y="243" font-size="16" fill="#960096" text-anchor="end">1.344</text>
<text x="1591" y="264" font-size="16" fill="#808000" xml:space="preserve">R( 9) =</text>
<text x="1730.5" y="264" font-size="16" fill="#808000" text-anchor="end">3044901</text>
<text x="1736" y="264" font-size="16" fill="#808000">Ohm</text>
<text x="1776" y="264" font-size="16" fill="#808000">G/G0=</text>
<text x="1898" y="264" font-size="16" fill="#808000" text-anchor="end">8.858</text>
<text x="1591" y="285" font-size="16" fill="#004040" xml:space="preserve">R(10) =</text>
<text x="1730.5" y="285" font-size="16" fill="#004040" text-anchor="end">44902</text>
<text x="1736" y="285" font-size="16" fill="#004040">Ohm</text>
<text x="1776" y="285" font-size="16" fill="#004040">G/G0=</text>
<text x="1898" y="285" font-size="16" fill="#004040" text-anchor="end">1.108</text>
<polygon points="1847.7,896.3 1938.7,808.8 1879.6,923.7 1871.7,941.9 1864.3,957.0 1847.7,965.3 1769.6,1041.6 1817.0,944.1 1645.5,868.4 1832.1,912.6" fill="#c0c0c0" stroke="none"/>
<path d="M1847.7 934.1 L1847.7 710.1 M1842.7 911.7 L1852.7 911.7 M1842.7 889.3 L1852.7 889.3 M1842.7 866.9 L1852.7 866.9 M1842.7 844.5 L1852.7 844.5 M1836.7 822.1 L1858.7 822.1 M1842.7 799.7 L1852.7 799.7 M1842.7 777.3 L1852.7 777.3 M1842.7 754.9 L1852.7 754.9 M1842.7 732.5 L1852.7 732.5 M1836.7 710.1 L1858.7 710.1" stroke="#800000" stroke-width="2.3" fill="none"/>
<path d="M1847.7 934.1 L1979.4 752.9 M1856.8 913.0 L1864.9 918.9 M1870.0 894.9 L1878.1 900.8 M1883.2 876.8 L1891.2 882.7 M1896.3 858.7 L1904.4 864.6 M1904.6 837.0 L1922.4 850.0 M1922.7 822.4 L1930.7 828.3 M1935.8 804.3 L1943.9 810.2 M1949.0 786.2 L1957.1 792.1 M1962.2 768.1 L1970.2 773.9 M1970.5 746.4 L1988.3 759.3" stroke="#008000" stroke-width="2.3" fill="none"/>
<path d="M1847.7 934.1 L2060.7 864.9 M1867.5 922.4 L1870.5 931.9 M1888.8 915.5 L1891.9 925.0 M1910.1 908.6 L1913.2 918.1 M1931.4 901.7 L1934.5 911.2 M1950.8 889.0 L1957.6 910.0 M1974.0 887.8 L1977.1 897.3 M1995.3 880.9 L1998.4 890.4 M2016.6 874.0 L2019.7 883.5 M2037.9 867.0 L2041.0 876.6 M2057.3 854.4 L2064.1 875.3" stroke="#000080" stroke-width="2.3" fill="none"/>
<path d="M1847.7 934.1 L2060.7 1003.3 M1870.5 936.3 L1867.5 945.8 M1891.9 943.2 L1888.8 952.7 M1913.2 950.1 L1910.1 959.6 M1934.5 957.0 L1931.4 966.5 M1957.6 958.2 L1950.8 979.2 M1977.1 970.9 L1974.0 980.4 M1998.4 977.8 L1995.3 987.3 M2019.7 984.7 L2016.6 994.2 M2041.0 991.6 L2037.9 1001.2 M2064.1 992.9 L2057.3 1013.8" stroke="#ff0000" stroke-width="2.3" fill="none"/>
<path d="M1847.7 934.1 L1979.4 1115.3 M1864.9 949.3 L1856.8 955.2 M1878.1 967.4 L1870.0 973.3 M1891.2 985.5 L1883.2 991.4 M1904.4 1003.6 L1896.3 1009.5 M1922.4 1018.2 L1904.6 1031.2 M1930.7 1039.9 L1922.7 1045.8 M1943.9 1058.0 L1935.8 1063.9 M1957.1 1076.1 L1949.0 1082.0 M1970.2 1094.3 L1962.2 1100.1 M1988.3 1108.9 L1970.5 1121.8" stroke="#00b400" stroke-width="2.3" fill="none"/>
<path d="M1847.7 934.1 L1847.7 1158.1 M1852.7 956.5 L1842.7 956.5 M1852.7 978.9 L1842.7 978.9 M1852.7 1001.3 L1842.7 1001.3 M1852.7 1023.7 L1842.7 1023.7 M1858.7 1046.1 L1836.7 1046.1 M1852.7 1068.5 L1842.7 1068.5 M1852.7 1090.9 L1842.7 1090.9 M1852.7 1113.3 L1842.7 1113.3 M1852.7 1135.7 L1842.7 1135.7 M1858.7 1158.1 L1836.7 1158.1" stroke="#0000ff" stroke-width="2.3" fill="none"/>
<path d="M1847.7 934.1 L1716.0 1115.3 M1838.6 955.2 L1830.5 949.3 M1825.4 973.3 L1817.3 967.4 M1812.2 991.4 L1804.2 985.5 M1799.1 1009.5 L1791.0 1003.6 M1790.8 1031.2 L1773.0 1018.2 M1772.7 1045.8 L1764.7 1039.9 M1759.6 1063.9 L1751.5 1058.0 M1746.4 1082.0 L1738.3 1076.1 M1733.2 1100.1 L1725.2 1094.3 M1724.9 1121.8 L1707.1 1108.9" stroke="#400040" stroke-width="2.3" fill="none"/>
<path d="M1847.7 934.1 L1634.7 1003.3 M1827.9 945.8 L1824.9 936.3 M1806.6 952.7 L1803.5 943.2 M1785.3 959.6 L1782.2 950.1 M1764.0 966.5 L1760.9 957.0 M1744.6 979.2 L1737.8 958.2 M1721.4 980.4 L1718.3 970.9 M1700.1 987.3 L1697.0 977.8 M1678.8 994.2 L1675.7 984.7 M1657.5 1001.2 L1654.4 991.6 M1638.1 1013.8 L1631.3 992.9" stroke="#960096" stroke-width="2.3" fill="none"/>
<path d="M1847.7 934.1 L1634.7 864.9 M1824.9 931.9 L1827.9 922.4 M1803.5 925.0 L1806.6 915.5 M1782.2 918.1 L1785.3 908.6 M1760.9 911.2 L1764.0 901.7 M1737.8 910.0 L1744.6 889.0 M1718.3 897.3 L1721.4 887.8 M1697.0 890.4 L1700.1 880.9 M1675.7 883.5 L1678.8 874.0 M1654.4 876.6 L1657.5 867.0 M1631.3 875.3 L1638.1 854.4" stroke="#808000" stroke-width="2.3" fill="none"/>
<path d="M1847.7 934.1 L1716.0 752.9 M1830.5 918.9 L1838.6 913.0 M1817.3 900.8 L1825.4 894.9 M1804.2 882.7 L1812.2 876.8 M1791.0 864.6 L1799.1 858.7 M1773.0 850.0 L1790.8 837.0 M1764.7 828.3 L1772.7 822.4 M1751.5 810.2 L1759.6 804.3 M1738.3 792.1 L1746.4 786.2 M1725.2 773.9 L1733.2 768.1 M1707.1 759.3 L1724.9 746.4" stroke="#004040" stroke-width="2.3" fill="none"/>
<text x="1847.7" y="696.7" font-size="24" text-anchor="middle" fill="#000">1</text>
<text x="1992.3" y="743.7" font-size="24" text-anchor="middle" fill="#000">2</text>
<text x="2081.7" y="866.7" font-size="24" text-anchor="middle" fill="#000">3</text>
<text x="2081.7" y="1018.7" font-size="24" text-anchor="middle" fill="#000">4</text>
<text x="1992.3" y="1141.7" font-size="24" text-anchor="middle" fill="#000">5</text>
<text x="1847.7" y="1188.7" font-size="24" text-anchor="middle" fill="#000">6</text>
<text x="1703.1" y="1141.7" font-size="24" text-anchor="middle" fill="#000">7</text>
<text x="1613.7" y="1018.7" font-size="24" text-anchor="middle" fill="#000">8</text>
<text x="1613.7" y="866.7" font-size="24" text-anchor="middle" fill="#000">9</text>
<text x="1703.1" y="743.7" font-size="24" text-anchor="middle" fill="#000">10</text>
</g></svg>
<div class="abs" style="left:1371.5px;top:1231px;width:1px;height:23px;background:#d5d5d5"></div>
<div class="abs" style="left:1683px;top:1231px;width:1px;height:23px;background:#d5d5d5"></div>
<div class="abs" style="left:1920px;top:1231px;width:1px;height:23px;background:#d5d5d5"></div>
<div class="txt" style="left:1378px;top:1234.5px;font-size:18.5px;color:#000;letter-spacing:0.35px">50 (of 61) at 49.0 sec</div>
<div class="txt" style="left:1690px;top:1234.5px;font-size:18.5px;color:#000;letter-spacing:0.9px">df = 600 ml/min</div>
</body></html>
